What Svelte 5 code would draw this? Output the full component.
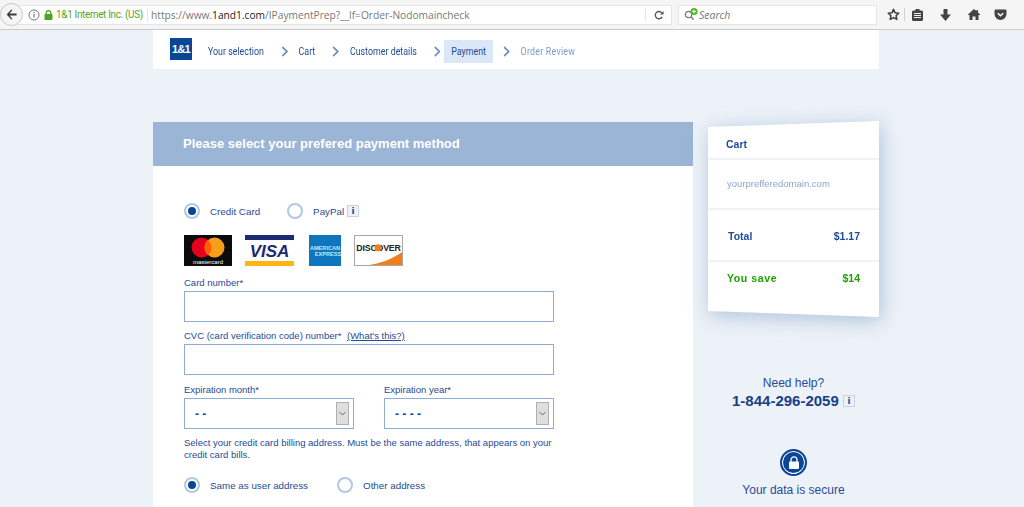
<script lang="ts">
	const steps = [
		{ label: 'Your selection' },
		{ label: 'Cart' },
		{ label: 'Customer details' },
		{ label: 'Payment', active: true },
		{ label: 'Order Review', pending: true },
	]
</script>

{#snippet radio(label: string, checked: boolean)}
	<span class="radio-item">
		<span class="radio" class:checked></span>
		<span>{label}</span>
	</span>
{/snippet}

{#snippet info()}
	<span class="info">i</span>
{/snippet}

{#snippet select(label: string, value: string)}
	<div class="field half">
		<span class="label">{label}</span>
		<div class="select">
			<span>{value}</span>
			<span class="select-btn">
				<svg width="7" height="5" viewBox="0 0 7 5"><path d="M.5 1l3 3 3-3" fill="none" stroke="#666" /></svg>
			</span>
		</div>
	</div>
{/snippet}

<div class="window">
	<header class="toolbar">
		<button class="back" aria-label="Back">
			<svg width="11" height="11" viewBox="0 0 13 12"><path d="M6 .5L.8 6 6 11.500h1.800L4.300 7.300H12.500V4.700H4.300L7.800.5z" fill="#3a3a3a" /></svg>
		</button>
		<div class="urlbar">
			<svg class="i-circle" width="12" height="12" viewBox="0 0 12 12"><circle cx="6" cy="6" r="5" fill="none" stroke="#777" /><path d="M6 5v3.500M6 3v1.200" stroke="#777" stroke-width="1.200" /></svg>
			<svg class="lock" width="9" height="10" viewBox="0 0 9 10"><path d="M2.200 4V3a2.300 2.300 0 0 1 4.600 0v1" fill="none" stroke="#4fa423" stroke-width="1.300" /><rect x="0.500" y="4" width="8" height="6" rx="1" fill="#4fa423" /></svg>
			<span class="org">1&amp;1 Internet Inc. (US)</span>
			<span class="url">https://www.<b>1and1.com</b>/IPaymentPrep?__lf=Order-Nodomaincheck</span>
			<span class="reload">
				<svg width="10" height="10" viewBox="0 0 11 11"><path d="M9 7.500A4 4 0 1 1 8.500 3" fill="none" stroke="#555" stroke-width="1.500" /><path d="M10.500 1v4h-4z" fill="#555" /></svg>
			</span>
		</div>
		<div class="search">
			<svg width="15" height="13" viewBox="0 0 15 13"><circle cx="4.500" cy="6.500" r="3.200" fill="none" stroke="#777" stroke-width="1.200" /><path d="M7 9l2.500 2.500" stroke="#777" stroke-width="1.400" /><circle cx="10" cy="3.500" r="3.500" fill="#4cb81c" /><path d="M10 1.500v4M8 3.500h4" stroke="#fff" /></svg>
			<span>Search</span>
		</div>
		<div class="tools">
			<svg width="13" height="13" viewBox="0 0 14 14"><path d="M7 1.500l1.700 3.700 4 .4-3 2.700.9 4L7 10.300l-3.600 2 .9-4-3-2.700 4-.4z" fill="none" stroke="#3c3c3c" stroke-width="1.600" stroke-linejoin="round" /></svg>
			<span class="sep"></span>
			<svg width="11" height="12" viewBox="0 0 11 12"><path d="M3.500 0h4v1.500h2A1.500 1.500 0 0 1 11 3v7.500A1.500 1.500 0 0 1 9.500 12h-8A1.500 1.500 0 0 1 0 10.500V3a1.500 1.500 0 0 1 1.500-1.500h2z" fill="#444" /><path d="M2 4.500h7M2 6.500h7M2 8.500h7" stroke="#f5f5f5" /></svg>
			<svg class="dl" width="11" height="12" viewBox="0 0 11 12"><path d="M3.500 0h4v5.500H11L5.500 12 0 5.500h3.500z" fill="#444" /></svg>
			<svg class="home" width="12" height="11" viewBox="0 0 12 11"><path d="M6 0l2.500 2.200V1h1.500v2.600L12 5.500v.5h-1.500v5H7.500V7.500h-3V11H1.500V6H0v-.5z" fill="#444" /></svg>
			<svg class="pocket" width="13" height="12" viewBox="0 0 13 12"><path d="M1.500 0.500h10a1 1 0 0 1 1 1V5a6 6 0 0 1-12 0V1.500a1 1 0 0 1 1-1z" fill="#444" /><path d="M3.800 4.200L6.500 6.800 9.200 4.200" fill="none" stroke="#fff" stroke-width="1.500" /></svg>
		</div>
	</header>

	<main class="page">
		<nav class="steps">
			<span class="logo">1&amp;1</span>
			<div class="step-list">
				{#each steps as step, i}
					{#if i > 0}
						<svg class="chev" width="9" height="11" viewBox="0 0 9 11"><path d="M1.500 1l6 4.500-6 4.500" fill="none" stroke="#6d8fb8" stroke-width="2" /></svg>
					{/if}
					<span class="step" class:active={step.active} class:pending={step.pending}>{step.label}</span>
				{/each}
			</div>
		</nav>

		<div class="columns">
			<section class="panel">
				<h1>Please select your prefered payment method</h1>
				<div class="form">
					<div class="radios method">
						{@render radio('Credit Card', true)}
						<span class="paypal">
							{@render radio('PayPal', false)}
							{@render info()}
						</span>
					</div>

					<div class="cards">
						<svg width="48" height="31" viewBox="0 0 48 31">
							<rect width="48" height="31" fill="#0b0b0b" />
							<circle cx="17.500" cy="12.500" r="10" fill="#e5001c" />
							<circle cx="30.500" cy="12.500" r="10" fill="#f79e1b" />
							<path d="M24 4.900a10 10 0 0 1 0 15.200 10 10 0 0 1 0-15.200z" fill="#ff5f00" />
							<text x="24" y="28.500" text-anchor="middle" class="mc">mastercard</text>
						</svg>
						<svg class="visa" width="49" height="31" viewBox="0 0 49 31">
							<rect width="49" height="5" fill="#1a2a71" />
							<rect y="26" width="49" height="5" fill="#fcb514" />
							<text x="24.500" y="21.500" text-anchor="middle" class="visa-t">VISA</text>
						</svg>
						<svg class="amex" width="32" height="31" viewBox="0 0 32 31">
							<rect width="32" height="31" fill="#0f76bd" />
							<text x="16" y="14.500" text-anchor="middle" class="amex-t">AMERICAN</text>
							<text x="19" y="21" text-anchor="middle" class="amex-t">EXPRESS</text>
						</svg>
						<svg class="discover" width="49" height="31" viewBox="0 0 49 31">
							<rect x=".5" y=".5" width="48" height="30" fill="#fff" stroke="#a8a8a8" />
							<path d="M15 30c14-2 25-7 33-13v13z" fill="#ef7f1a" />
							<text x="24.500" y="15.500" text-anchor="middle" class="disc-t">DISCOVER</text>
							<circle cx="24" cy="12.700" r="3.500" fill="#ef7f1a" />
						</svg>
					</div>

					<label class="field">
						<span class="label">Card number*</span>
						<input type="text" />
					</label>

					<label class="field cvc">
						<span class="label">CVC (card verification code) number* <u>(What's this?)</u></span>
						<input type="text" />
					</label>

					<div class="row">
						{@render select('Expiration month*', '- -')}
						{@render select('Expiration year*', '- - - -')}
					</div>

					<p class="hint">Select your credit card billing address. Must be the same address, that appears on your credit card bills.</p>

					<div class="radios address">
						{@render radio('Same as user address', true)}
						{@render radio('Other address', false)}
					</div>
				</div>
			</section>

			<aside class="side">
				<div class="cart-wrap">
					<div class="cart">
						<div class="cart-row title">Cart</div>
						<div class="cart-row domain">yourprefferedomain.com</div>
						<div class="cart-row total"><span>Total</span><span>$1.17</span></div>
						<div class="cart-row save"><span class="save-label">You save</span><span>$14</span></div>
					</div>
				</div>

				<div class="help">
					<div>Need help?</div>
					<div class="phone">1-844-296-2059 {@render info()}</div>
				</div>

				<div class="secure">
					<span class="seal">
						<svg width="12" height="13" viewBox="0 0 12 13"><path d="M3 6V3.800a3 3 0 0 1 6 0V6" fill="none" stroke="#fff" stroke-width="1.300" /><rect x="1" y="5.500" width="10" height="7.500" rx="1" fill="#fff" /></svg>
					</span>
					<div>Your data is secure</div>
				</div>
			</aside>
		</div>
	</main>
</div>

<style>
	:global(body) {
		margin: 0;
	}

	.window {
		height: 507px;
		overflow: hidden;
		display: flex;
		flex-direction: column;
		font-family: 'Liberation Sans', Arial, sans-serif;
		color: #1f4b96;
		background: #edf2f8;
	}

	/* Browser chrome */
	.toolbar {
		position: relative;
		flex: none;
		height: 29px;
		display: flex;
		align-items: center;
		background: #f5f5f5;
		border-bottom: 1px solid #c9c9c9;
		font-family: 'Open Sans', sans-serif;
		box-sizing: content-box;
	}

	.back {
		position: absolute;
		left: 0;
		top: 3px;
		z-index: 1;
		width: 23px;
		height: 23px;
		padding: 0;
		border: 1px solid #c6c6c6;
		border-radius: 50%;
		background: #f5f5f5;
		display: flex;
		align-items: center;
		justify-content: center;
	}

	.urlbar {
		margin-left: 14px;
		width: 658px;
		height: 20px;
		display: flex;
		align-items: center;
		background: #fff;
		border: 1px solid #e6e6e6;
		box-sizing: border-box;
		font-size: 10.200px;
	}

	.i-circle {
		margin-left: 13px;
	}

	.lock {
		margin-left: 4px;
	}

	.org {
		margin-left: 3px;
		width: 91px;
		flex: none;
		color: #57a52a;
		font-family: 'Roboto', sans-serif;
		font-size: 10px;
		letter-spacing: -0.350px;
		white-space: nowrap;
	}

	.url {
		flex: 1;
		padding-left: 3px;
		border-left: 1px solid #e6e6e6;
		color: #777;
		white-space: nowrap;
	}

	.url b {
		font-weight: 400;
		color: #222;
	}

	.reload {
		width: 25px;
		height: 14px;
		display: flex;
		align-items: center;
		justify-content: center;
		border-left: 1px solid #e6e6e6;
	}

	.search {
		margin-left: 6px;
		width: 199px;
		height: 20px;
		display: flex;
		align-items: center;
		padding-left: 5px;
		background: #fff;
		border: 1px solid #e6e6e6;
		box-sizing: border-box;
		font-size: 10.500px;
		font-style: italic;
		color: #777;
	}

	.tools {
		margin-left: 10px;
		display: flex;
		align-items: center;
	}

	.sep {
		width: 1px;
		height: 13px;
		margin: 0 7px 0 4px;
		background: #d0d0d0;
	}

	.dl {
		margin-left: 17px;
	}

	.home {
		margin-left: 17px;
	}

	.pocket {
		margin-left: 14px;
	}

	.page {
		flex: 1;
		width: 726px;
		margin-left: 153px;
	}

	/* Steps */
	.steps {
		height: 39px;
		display: flex;
		align-items: center;
		padding-left: 17px;
		background: #fff;
		color: #1f4b96;
	}

	.logo {
		flex: none;
		width: 22px;
		height: 22px;
		margin-right: 16px;
		margin-top: -1px;
		background: #0b4595;
		color: #fff;
		font-weight: 700;
		font-size: 11px;
		letter-spacing: -0.800px;
		display: flex;
		align-items: center;
		justify-content: center;
	}

	/* the original face is a condensed one, so the whole strip is squeezed */
	.step-list {
		display: flex;
		align-items: center;
		margin-top: 3px;
		font-family: 'Roboto', sans-serif;
		font-size: 11.500px;
		transform: scaleX(0.77);
		transform-origin: left center;
	}

	.step {
		display: block;
		line-height: 23px;
		white-space: nowrap;
	}

	.step.active {
		margin: 0 -9.500px 0 -10px;
		padding: 0 9.500px;
		background: #d9e7f6;
	}

	.step.pending {
		color: #7c9dc9;
		letter-spacing: 0.300px;
	}

	.chev {
		flex: none;
		margin: 1px 14px 0 22px;
	}

	.columns {
		display: flex;
		gap: 15px;
		margin-top: 53px;
		align-items: flex-start;
	}

	/* Payment panel */
	.panel {
		flex: none;
		width: 540px;
		height: 400px;
		background: #fff;
	}

	h1 {
		margin: 0;
		height: 44px;
		padding-left: 30px;
		background: #9ab5d5;
		color: #fff;
		font-size: 13px;
		line-height: 44px;
		font-weight: 700;
	}

	.form {
		padding: 37px 139px 0 31px;
		font-size: 9.500px;
	}

	.radios {
		display: flex;
		font-size: 9.800px;
	}

	.radio-item {
		display: inline-flex;
		align-items: center;
		gap: 10px;
	}

	.radio {
		width: 12px;
		height: 12px;
		border: 2px solid #b2c7e1;
		border-radius: 50%;
		background: #fff;
		display: flex;
		align-items: center;
		justify-content: center;
	}

	.radio.checked::after {
		content: '';
		width: 8px;
		height: 8px;
		border-radius: 50%;
		background: #0b4595;
	}

	.method {
		gap: 27px;
		height: 16px;
		align-items: center;
	}

	.paypal {
		display: inline-flex;
		align-items: center;
		gap: 3px;
	}

	.info {
		display: inline-block;
		width: 12px;
		height: 12px;
		box-sizing: border-box;
		border: 1px solid #c6d3e3;
		background: #eef2f7;
		color: #1f4b96;
		font-family: 'DejaVu Sans', sans-serif;
		font-size: 9px;
		font-weight: 700;
		line-height: 10px;
		text-align: center;
		vertical-align: 2px;
	}

	.cards {
		display: flex;
		margin-top: 16px;
	}

	.visa {
		margin-left: 13px;
	}

	.amex {
		margin-left: 15px;
	}

	.discover {
		margin-left: 13px;
	}

	.mc {
		font-size: 6px;
		fill: #fff;
	}

	.visa-t {
		font-size: 17px;
		font-weight: 700;
		font-style: italic;
		fill: #1a2a71;
	}

	.amex-t {
		font-size: 5.600px;
		font-weight: 700;
		fill: #cfe4f3;
	}

	.disc-t {
		font-size: 8.800px;
		font-weight: 700;
		fill: #222;
		letter-spacing: -0.200px;
	}

	.field {
		display: block;
		margin-top: 10px;
	}

	.field.cvc {
		margin-top: 7px;
	}

	.label {
		display: block;
		line-height: 14px;
		margin-bottom: 1px;
		white-space: nowrap;
	}

	.label u {
		margin-left: 3px;
	}

	input {
		display: block;
		width: 370px;
		height: 31px;
		box-sizing: border-box;
		padding: 0;
		border: 1px solid #8fadd2;
		background: #fff;
	}

	.row {
		display: flex;
		gap: 30px;
		margin-top: 8px;
	}

	.row .field {
		width: 170px;
		margin-top: 0;
	}

	.select {
		height: 31px;
		box-sizing: border-box;
		display: flex;
		align-items: center;
		justify-content: space-between;
		padding: 0 4px 0 10px;
		border: 1px solid #8fadd2;
		font-weight: 700;
		font-size: 12px;
		color: #0b4595;
	}

	.select-btn {
		width: 13px;
		height: 23px;
		box-sizing: border-box;
		border: 1px solid #b0b0b0;
		background: #dedede;
		display: flex;
		align-items: center;
		justify-content: center;
	}

	.hint {
		margin: 8px 0 0;
		line-height: 12px;
		width: 372px;
	}

	.address {
		gap: 29px;
		margin-top: 16px;
		align-items: center;
	}

	/* Cart */
	.side {
		flex: 1;
		margin-top: -1px;
	}

	.cart-wrap {
		filter: drop-shadow(2px 4px 10px rgba(110, 145, 190, 0.5));
	}

	.cart {
		height: 196px;
		background: #fff;
		clip-path: polygon(0 6px, 100% 0, 100% 100%, 0 190px);
	}

	.cart-row {
		box-sizing: border-box;
		display: flex;
		align-items: center;
		justify-content: space-between;
		padding: 0 19px;
		border-bottom: 2px solid #edf2f8;
		font-size: 10.500px;
		font-weight: 700;
	}

	.title {
		height: 39px;
		padding-left: 18px;
		padding-top: 9px;
	}

	.domain {
		height: 50px;
		padding-left: 19px;
		font-weight: 400;
		font-size: 9.500px;
		color: #8ca6cf;
		padding-bottom: 1px;
	}

	.total {
		height: 52px;
		padding-top: 2px;
		padding-left: 20px;
	}

	.save {
		height: 55px;
		color: #1fa200;
		border-bottom: 0;
		padding-bottom: 23px;
	}

	.save-label {
		letter-spacing: 0.600px;
	}

	.help {
		margin-top: 58px;
		text-align: center;
		font-size: 12px;
		line-height: 16px;
	}

	.phone {
		font-size: 15px;
		font-weight: 700;
		line-height: 20px;
		color: #173f8a;
	}

	.secure {
		margin-top: 38px;
		text-align: center;
		font-size: 12px;
	}

	.seal {
		width: 23px;
		height: 23px;
		margin-bottom: 7px;
		border: 2px solid #0b4595;
		border-radius: 50%;
		background: #0b4595;
		box-shadow: inset 0 0 0 1px #fff;
		display: inline-flex;
		align-items: center;
		justify-content: center;
	}
</style>
